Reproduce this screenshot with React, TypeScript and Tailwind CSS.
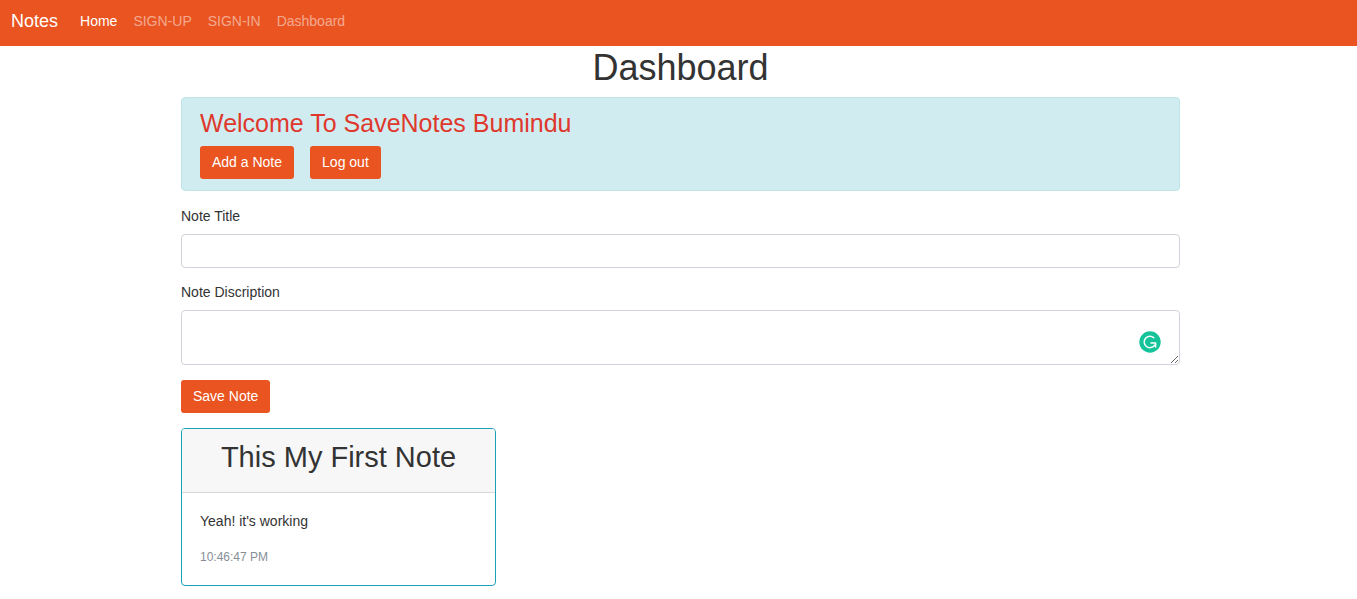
import React from "react";

const links = ["SIGN-UP", "SIGN-IN", "Dashboard"];

function Button({ children, type = "button" }: { children: React.ReactNode; type?: "button" | "submit" }) {
  return (
    <button
      type={type}
      className="cursor-pointer rounded-[3px] bg-[#e95420] px-3 py-[6px] text-[14px] leading-[21px] text-white hover:bg-[#d34615]"
    >
      {children}
    </button>
  );
}

function Navbar() {
  return (
    <nav className="flex h-[46px] items-center gap-[22px] bg-[#e95420] px-[11px] pb-1">
      <a href="#" className="text-[18px] leading-[27px] text-white">
        Notes
      </a>
      <div className="flex gap-4 text-[14px] leading-[21px]">
        <a href="#" className="text-white" aria-current="page">
          Home
        </a>
        {links.map((label) => (
          <a key={label} href="#" className="text-white/50 hover:text-white/75">
            {label}
          </a>
        ))}
      </div>
    </nav>
  );
}

function AssistantBadge() {
  return (
    <svg className="absolute right-[19px] bottom-3 size-[22px]" viewBox="0 0 22 22" fill="none" aria-hidden="true">
      <circle cx="11" cy="11" r="10.7" fill="#15c39a" />
      <path d="M14.8 6.8A5.7 5.7 0 1 0 15.6 14.2" stroke="#fff" strokeWidth="1.5" strokeLinecap="round" />
      <path d="M12 12H16.6V16" stroke="#fff" strokeWidth="1.5" strokeLinecap="round" strokeLinejoin="round" />
    </svg>
  );
}

export default function App() {
  return (
    <div className="bg-white font-['Liberation_Sans',Arial,sans-serif] text-[14px] leading-[21px] text-[#333]">
      <Navbar />
      <main className="pb-3 pl-1">
        <div className="mx-auto w-full max-w-[999px]">
          <h1 className="mb-2 text-center text-[36px] leading-[43px]">Dashboard</h1>

          <section className="mb-[15px] rounded-[4px] border border-[#bee5eb] bg-[#d1ecf1] px-[18px] py-[11px]">
            <h3 className="mb-2 text-[25px] leading-[29px] text-[#df382c]">Welcome To SaveNotes Bumindu</h3>
            <div className="flex gap-4">
              <Button>Add a Note</Button>
              <Button>Log out</Button>
            </div>
          </section>

          <form className="mb-[15px]" onSubmit={(e) => e.preventDefault()}>
            <div className="mb-[14px]">
              <label htmlFor="title" className="mb-[7px] block">
                Note Title
              </label>
              <input
                id="title"
                type="text"
                className="block h-[34px] w-full rounded-[4px] border border-[#ced4da] bg-white px-[11px] outline-none"
              />
            </div>
            <div className="mb-[15px]">
              <label htmlFor="description" className="mb-[7px] block">
                Note Discription
              </label>
              <div className="relative">
                <textarea
                  id="description"
                  rows={2}
                  className="block h-[55px] w-full rounded-[4px] border border-[#ced4da] bg-white px-[11px] py-[5px] leading-[21px] outline-none"
                />
                <AssistantBadge />
              </div>
            </div>
            <Button type="submit">Save Note</Button>
          </form>

          <article className="w-full max-w-[315px] overflow-hidden rounded-[4px] border border-[#17a2b8] bg-white">
            <header className="border-b border-[#d8d8d8] bg-[#f7f7f7] px-[18px] pt-[11px] pb-[18px]">
              <h2 className="text-center text-[29px] leading-[34px]">This My First Note</h2>
            </header>
            <div className="px-[18px] pt-[18px] pb-[17px]">
              <p className="mb-[15px]">Yeah! it's working</p>
              <time className="block text-[12px] leading-[21px] text-[#868e96]">10:46:47 PM</time>
            </div>
          </article>
        </div>
      </main>
    </div>
  );
}
